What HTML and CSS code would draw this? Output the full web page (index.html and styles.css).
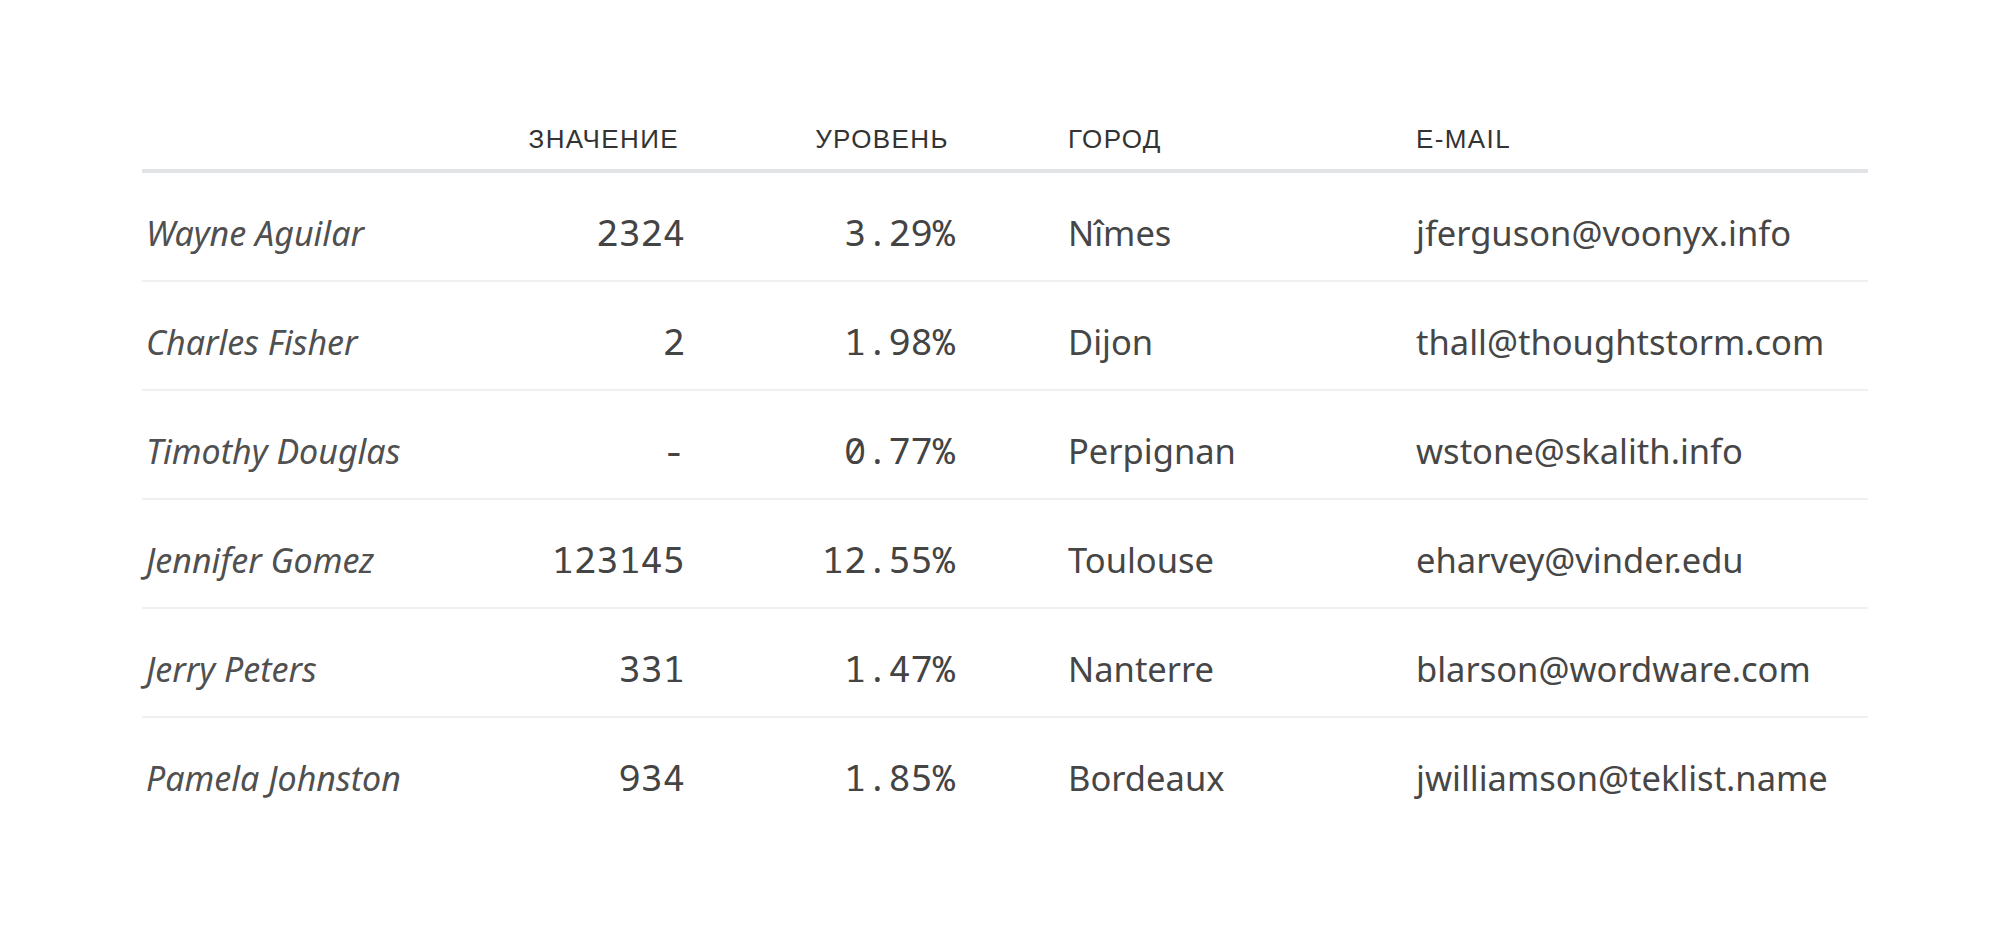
FILE: index.html
```html
<!DOCTYPE html>
<html lang="ru">
<head>
<meta charset="utf-8">
<title>Таблица</title>
<link rel="stylesheet" href="styles.css">
</head>
<body>
<div class="page">
  <div class="table" role="table">
    <div class="row head" role="row">
      <div class="cell" role="columnheader"></div>
      <div class="cell num" role="columnheader">ЗНАЧЕНИЕ</div>
      <div class="cell num" role="columnheader">УРОВЕНЬ</div>
      <div class="cell city" role="columnheader">ГОРОД</div>
      <div class="cell" role="columnheader">E-MAIL</div>
    </div>
    <div class="row" role="row">
      <div class="cell name">Wayne Aguilar</div>
      <div class="cell num">2324</div>
      <div class="cell num">3.29%</div>
      <div class="cell city">Nîmes</div>
      <div class="cell mail">jferguson@voonyx.info</div>
    </div>
    <div class="row" role="row">
      <div class="cell name">Charles Fisher</div>
      <div class="cell num">2</div>
      <div class="cell num">1.98%</div>
      <div class="cell city">Dijon</div>
      <div class="cell mail">thall@thoughtstorm.com</div>
    </div>
    <div class="row" role="row">
      <div class="cell name">Timothy Douglas</div>
      <div class="cell num">-</div>
      <div class="cell num">0.77%</div>
      <div class="cell city">Perpignan</div>
      <div class="cell mail">wstone@skalith.info</div>
    </div>
    <div class="row" role="row">
      <div class="cell name">Jennifer Gomez</div>
      <div class="cell num">123145</div>
      <div class="cell num">12.55%</div>
      <div class="cell city">Toulouse</div>
      <div class="cell mail">eharvey@vinder.edu</div>
    </div>
    <div class="row" role="row">
      <div class="cell name">Jerry Peters</div>
      <div class="cell num">331</div>
      <div class="cell num">1.47%</div>
      <div class="cell city">Nanterre</div>
      <div class="cell mail">blarson@wordware.com</div>
    </div>
    <div class="row last" role="row">
      <div class="cell name">Pamela Johnston</div>
      <div class="cell num">934</div>
      <div class="cell num">1.85%</div>
      <div class="cell city">Bordeaux</div>
      <div class="cell mail">jwilliamson@teklist.name</div>
    </div>
  </div>
</div>
</body>
</html>
```
FILE: styles.css
```css
html, body {
  margin: 0;
  background: #ffffff;
}

.page {
  padding: 125px 0 0 142px;
}

.table {
  width: 1726px;
}

.row {
  display: grid;
  grid-template-columns: 315px 230px 270px 459px 452px;
  align-items: baseline;
  box-sizing: border-box;
  height: 109px;
  padding-top: 36px;
  border-bottom: 2px solid #eef0f2;
  font-family: "Noto Sans", sans-serif;
  font-size: 34.5px;
  line-height: 46px;
  color: #464646;
}

.row.last {
  border-bottom: 0;
}

.row.head {
  height: 48px;
  padding-top: 0;
  border-bottom: 4px solid #e2e3e7;
  font-family: "Liberation Sans", Arial, sans-serif;
  font-size: 26px;
  line-height: 29px;
  letter-spacing: 1.4px;
  color: #333333;
}

.cell {
  white-space: nowrap;
}

.name {
  padding-left: 4px;
  font-size: 34px;
  font-style: italic;
  color: #505050;
}

.num {
  text-align: right;
  padding-right: 2px;
}

.row:not(.head) .num {
  font-family: "Noto Sans Mono", "DejaVu Sans Mono", monospace;
  font-size: 37px;
  color: #444444;
}

.head .num {
  padding-right: 8px;
}

.city {
  padding-left: 111px;
}
```
